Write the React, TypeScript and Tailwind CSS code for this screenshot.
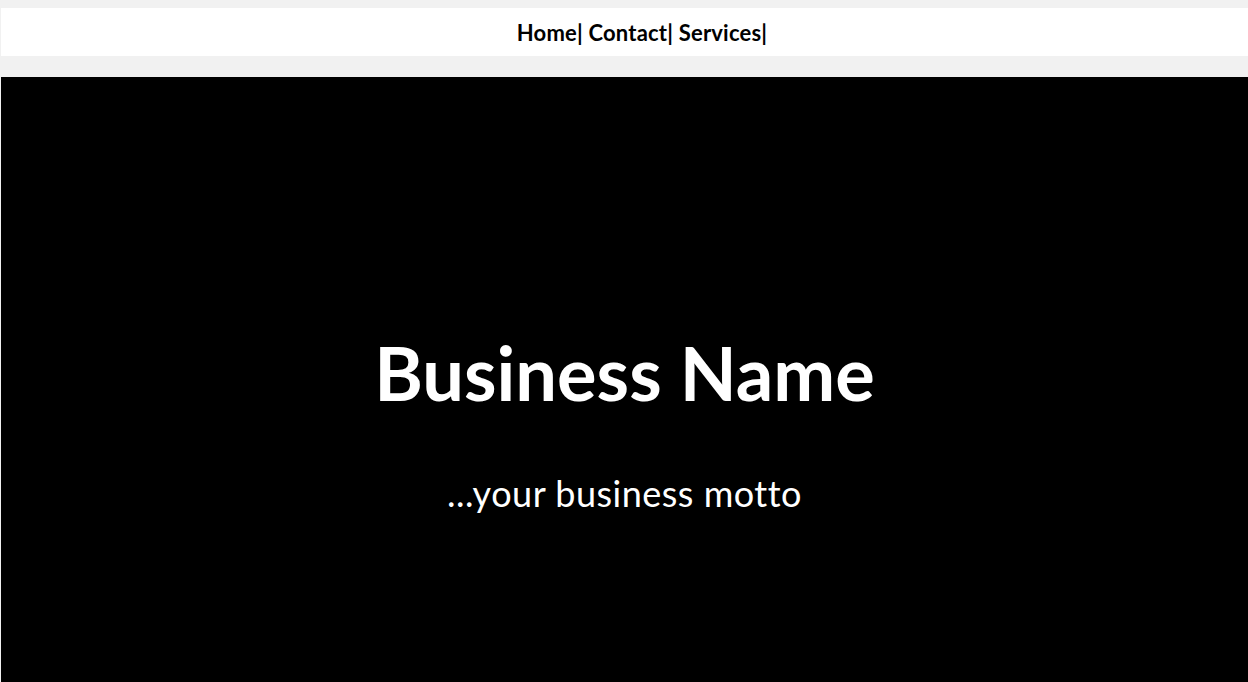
export default function App() {
    return (
        <div className="min-h-screen bg-[#f1f1f1] pt-2 pl-px" style={{ fontFamily: '"Comic Sans MS", Lato, sans-serif' }}>
            {/* Top navigation */}
            <nav className="flex h-12 items-center justify-center bg-white">
                <ul className="flex pl-[35px] text-[22px] font-bold tracking-[0.2px] text-black">
                    <li>Home|&nbsp;</li>
                    <li>Contact|&nbsp;</li>
                    <li>Services|</li>
                </ul>
            </nav>
            {/* Hero */}
            <header className="mt-[21px] flex h-[605px] flex-col items-center bg-black pt-[259px] text-white">
                <h1 className="text-[74px] leading-none font-bold">Business Name</h1>
                <p className="mt-[65px] text-[36px] leading-none tracking-[0.5px]">...your business motto</p>
            </header>
        </div>
    );
}
